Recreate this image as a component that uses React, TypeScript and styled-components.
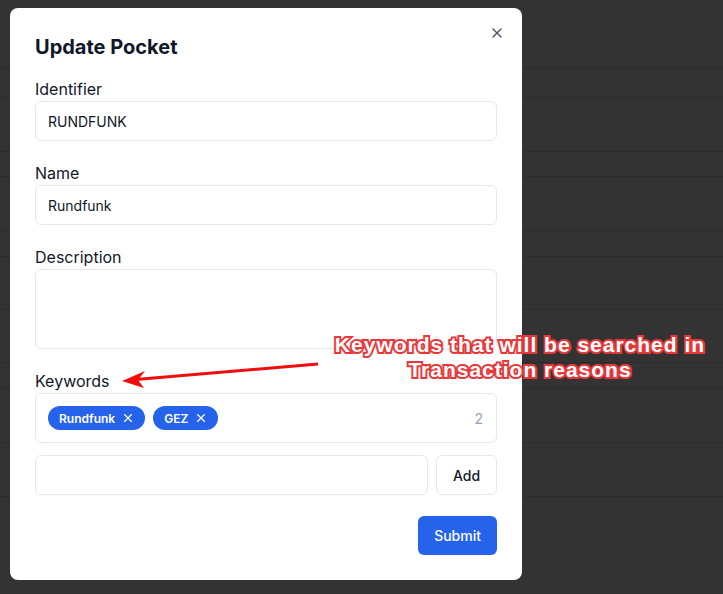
import styled, { createGlobalStyle } from "styled-components";
import { X } from "lucide-react";

const GlobalStyle = createGlobalStyle`
  html, body {
    margin: 0;
    padding: 0;
    background: #333333;
    font-family: Inter, "Noto Sans", sans-serif;
    overflow: hidden;
  }
  * { box-sizing: border-box; }
`;

const Page = styled.div`
  position: relative;
  width: 723px;
  height: 594px;
  background: #333333;
`;

const Backdrop = styled.div`
  display: flex;
  flex-direction: column;
`;

const BgRow = styled.div<{ $h: number }>`
  height: ${(p) => p.$h}px;
  border-bottom: 1px solid #2c2c2c;
`;

const Modal = styled.div`
  position: absolute;
  top: 8px;
  left: 10px;
  width: 512px;
  height: 572px;
  background: #ffffff;
  border-radius: 8px;
  padding: 25px;
  display: flex;
  flex-direction: column;
`;

const Title = styled.h2`
  margin: 0 0 16px;
  font-size: 20px;
  line-height: 28px;
  font-weight: 700;
  color: #0f172a;
`;

const CloseButton = styled.button`
  position: absolute;
  top: 17px;
  right: 17px;
  border: 0;
  background: none;
  padding: 0;
  color: #475569;
  display: flex;
`;

const Field = styled.div<{ $last?: boolean }>`
  display: flex;
  flex-direction: column;
  margin-bottom: ${(p) => (p.$last ? 0 : 20)}px;
`;

const Label = styled.label`
  font-size: 16px;
  line-height: 24px;
  color: #0f172a;
`;

const Input = styled.div<{ $h?: number; $grow?: boolean }>`
  height: ${(p) => p.$h ?? 40}px;
  flex: ${(p) => (p.$grow ? 1 : "none")};
  border: 1px solid #e2e8f0;
  border-radius: 6px;
  padding: 0 12px;
  display: flex;
  align-items: center;
  font-size: 14px;
  color: #0f172a;
`;

const TagBox = styled.div`
  height: 50px;
  border: 1px solid #e2e8f0;
  border-radius: 6px;
  padding: 0 12px;
  display: flex;
  align-items: center;
  gap: 8px;
`;

const Chip = styled.span`
  height: 24px;
  border-radius: 12px;
  background: #2563eb;
  color: #ffffff;
  font-size: 12px;
  font-weight: 600;
  padding: 0 10px 0 11px;
  display: flex;
  align-items: center;
  gap: 6px;
`;

const Count = styled.span`
  margin-left: auto;
  font-size: 14px;
  color: #94a3b8;
  padding-right: 1px;
`;

const AddRow = styled.div`
  display: flex;
  gap: 8px;
  margin-top: 12px;
`;

const OutlineButton = styled.button`
  height: 40px;
  width: 61px;
  border: 1px solid #e2e8f0;
  border-radius: 6px;
  background: #ffffff;
  font-family: inherit;
  font-size: 14px;
  font-weight: 500;
  color: #0f172a;
`;

const Footer = styled.div`
  display: flex;
  justify-content: flex-end;
  margin-top: 21px;
`;

const PrimaryButton = styled.button`
  height: 39px;
  padding: 0 16px;
  border: 0;
  border-radius: 6px;
  background: #2563eb;
  color: #ffffff;
  font-family: inherit;
  font-size: 14px;
  font-weight: 500;
`;

const Annotation = styled.div`
  position: absolute;
  left: 300px;
  top: 332px;
  width: 440px;
  text-align: center;
  font-family: "Liberation Sans", Arial, sans-serif;
  font-weight: 700;
  font-size: 21px;
  line-height: 25px;
  letter-spacing: 1px;
  color: #ffffff;
  -webkit-text-stroke: 4px #e8383a;
  paint-order: stroke fill;
`;

const ArrowSvg = styled.svg`
  position: absolute;
  left: 0;
  top: 0;
  pointer-events: none;
`;

const rows = [69, 29, 54, 25, 54, 26, 53, 53, 26, 54, 54, 97];

export default function App() {
  return (
    <Page>
      <GlobalStyle />
      <Backdrop>
        {rows.map((h, i) => (
          <BgRow key={i} $h={h} />
        ))}
      </Backdrop>
      <Modal>
        <CloseButton>
          <X size={16} strokeWidth={2} />
        </CloseButton>
        <Title>Update Pocket</Title>
        <Field>
          <Label>Identifier</Label>
          <Input>RUNDFUNK</Input>
        </Field>
        <Field>
          <Label>Name</Label>
          <Input>Rundfunk</Input>
        </Field>
        <Field>
          <Label>Description</Label>
          <Input $h={80} />
        </Field>
        <Field $last>
          <Label>Keywords</Label>
          <TagBox>
            <Chip>
              Rundfunk <X size={14} strokeWidth={2} />
            </Chip>
            <Chip>
              GEZ <X size={14} strokeWidth={2} />
            </Chip>
            <Count>2</Count>
          </TagBox>
        </Field>
        <AddRow>
          <Input $grow />
          <OutlineButton>Add</OutlineButton>
        </AddRow>
        <Footer>
          <PrimaryButton>Submit</PrimaryButton>
        </Footer>
      </Modal>
      <ArrowSvg width="723" height="594" viewBox="0 0 723 594">
        <line x1="318" y1="364" x2="136" y2="379.5" stroke="#f20d0d" strokeWidth="3" />
        <polygon points="122,381 145,371 138,380 144,388" fill="#f20d0d" />
      </ArrowSvg>
      <Annotation>
        Keywords that will be searched in
        <br />
        Transaction reasons
      </Annotation>
    </Page>
  );
}
